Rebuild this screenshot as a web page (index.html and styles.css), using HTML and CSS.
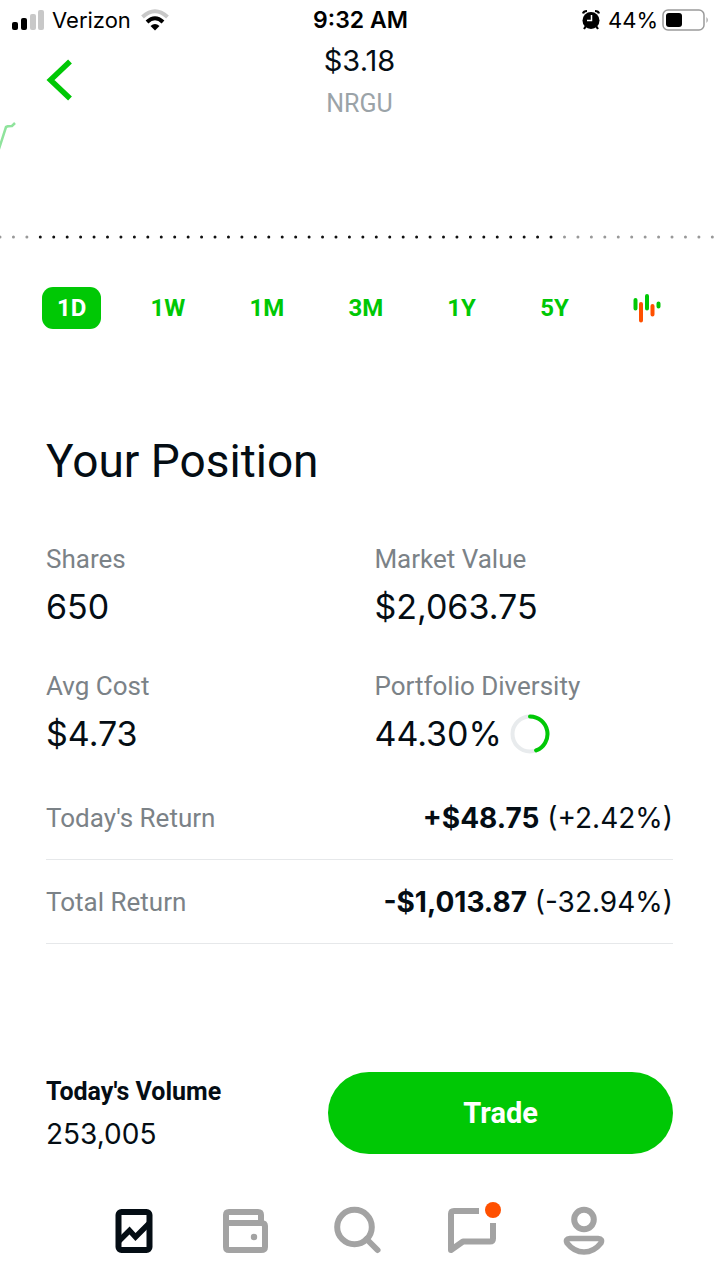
FILE: index.html
```
<!DOCTYPE html>
<html lang="en">
<head>
  <meta charset="UTF-8">
  <meta name="viewport" content="width=device-width, initial-scale=1">
  <title>NRGU</title>
  <link rel="stylesheet" href="styles.css">
</head>
<body>
  <div class="status-bar">
    <div class="status-left">
      <svg width="32" height="20" viewBox="0 0 32 20" aria-hidden="true">
        <rect x="0" y="12" width="6" height="8" rx="2"/>
        <rect x="9" y="8" width="6" height="12" rx="2"/>
        <rect x="18" y="4" width="6" height="16" rx="2" fill="#c8c8c8"/>
        <rect x="26" y="0" width="6" height="20" rx="2" fill="#c8c8c8"/>
      </svg>
      <span>Verizon</span>
      <svg width="28" height="22" viewBox="0 0 28 22" aria-hidden="true">
        <path d="M1.500 8Q14-3.500 26.500 8" fill="none" stroke="#c8c8c8" stroke-width="4"/>
        <path d="M6 13Q14 5.500 22 13" fill="none" stroke="#000" stroke-width="4"/>
        <path d="M9.500 17Q14 13 18.500 17L14 21.500Z"/>
      </svg>
    </div>
    <div class="status-time">9:32 AM</div>
    <div class="status-right">
      <svg width="18" height="22" viewBox="0 0 18 22" aria-hidden="true">
        <circle cx="9" cy="11.500" r="8.500"/>
        <path d="M1 4.500Q1.500 2 5 2M13 2Q16.500 2 17 4.500M4 17L2 20M14 17L16 20" fill="none" stroke="#000" stroke-width="2.200"/>
        <path d="M9.500 6V11.500H5" fill="none" stroke="#fff" stroke-width="1.500"/>
      </svg>
      <span>44%</span>
      <svg width="47" height="22" viewBox="0 0 47 22" aria-hidden="true">
        <rect x="1" y="1" width="41" height="20" rx="5" fill="none" stroke="#9a9a9a" stroke-width="1.500"/>
        <rect x="4" y="4" width="16" height="14" rx="3"/>
        <path d="M44.500 8Q47 11 44.500 14Z" fill="#9a9a9a"/>
      </svg>
    </div>
  </div>

  <header class="header">
    <button class="back-btn" aria-label="Back">
      <svg width="26" height="42" viewBox="0 0 26 42"><path d="M24 2.500L4.500 21L24 39.500" fill="none" stroke="#00c805" stroke-width="5.500"/></svg>
    </button>
    <div class="price">$3.18</div>
    <h1 class="ticker">NRGU</h1>
  </header>

  <!-- end of the price line, and the previous close as dots -->
  <svg class="chart" viewBox="0 0 719 120" aria-hidden="true">
    <path d="M-2 30L6 5Q7 4 12 4L15 1" fill="none" stroke="#8fe39c" stroke-width="2.500"/>
    <g fill="none" stroke-width="3" stroke-linecap="round" stroke-dasharray="0 13.440">
      <path d="M0 115H34" stroke="#999"/>
      <path d="M40.300 115H552" stroke="#111"/>
      <path d="M564.500 115H719" stroke="#999"/>
    </g>
  </svg>

  <nav class="periods" aria-label="Chart range">
    <button class="period active">1D</button>
    <button class="period">1W</button>
    <button class="period">1M</button>
    <button class="period">3M</button>
    <button class="period">1Y</button>
    <button class="period">5Y</button>
    <button class="period" aria-label="Candlestick chart">
      <svg width="28" height="30" viewBox="0 0 28 30">
        <g fill="none" stroke-width="4" stroke-linecap="round">
          <path d="M2.500 7V15.500M14 3V15.500M25.500 10.500V13.500" stroke="#00c805"/>
          <path d="M8 11V27.500M19.500 13V21.500" stroke="#ff5000"/>
        </g>
      </svg>
    </button>
  </nav>

  <main class="position">
    <h2>Your Position</h2>
    <dl class="stats">
      <div>
        <dt>Shares</dt>
        <dd>650</dd>
      </div>
      <div>
        <dt>Market Value</dt>
        <dd>$2,063.75</dd>
      </div>
      <div>
        <dt>Avg Cost</dt>
        <dd>$4.73</dd>
      </div>
      <div>
        <dt>Portfolio Diversity</dt>
        <dd>44.30%
          <svg width="40" height="40" viewBox="0 0 40 40" aria-hidden="true">
            <circle cx="20" cy="20" r="17.500" fill="none" stroke="#e8ebed" stroke-width="4"/>
            <path d="M20 2.500A17.500 17.500 0 0 1 26.100 36.400" fill="none" stroke="#00c805" stroke-width="4" stroke-linecap="round"/>
          </svg>
        </dd>
      </div>
    </dl>
    <dl class="returns">
      <div>
        <dt>Today's Return</dt>
        <dd><b>+$48.75</b> (+2.42%)</dd>
      </div>
      <div>
        <dt>Total Return</dt>
        <dd><b>-$1,013.87</b> (-32.94%)</dd>
      </div>
    </dl>
  </main>

  <footer class="footer">
    <div class="trade-bar">
      <div class="volume">
        <b>Today's Volume</b>
        <span>253,005</span>
      </div>
      <button class="trade-btn">Trade</button>
    </div>
    <nav class="tabs" aria-label="Main">
      <a href="#" aria-label="Investing" class="current">
        <svg width="50" height="48" viewBox="0 0 50 48">
          <rect x="9.500" y="5" width="31" height="38" rx="3"/>
          <path d="M10 34L20.500 23.500L26.500 30L41 15.500" stroke-width="5.500"/>
        </svg>
      </a>
      <a href="#" aria-label="Cash">
        <svg width="50" height="48" viewBox="0 0 50 48">
          <path d="M39 16V8Q39 5 36 5H7Q4 5 4 8V40Q4 43 7 43H39Q43 43 43 40V19Q43 16 39 16H4"/>
          <circle cx="32" cy="30" r="3.200" fill="currentColor" stroke="none"/>
        </svg>
      </a>
      <a href="#" aria-label="Search">
        <svg width="50" height="48" viewBox="0 0 50 48">
          <circle cx="20.500" cy="20" r="17.300"/>
          <path d="M32.500 32L43.500 43" stroke-linecap="round"/>
        </svg>
      </a>
      <a href="#" aria-label="Messages">
        <svg width="54" height="48" viewBox="0 0 54 48">
          <path d="M34 4H9Q6 4 6 7V43L18 34.500H45Q48 34.500 48 31.500V16" stroke-linejoin="round"/>
          <circle cx="48" cy="3" r="8" fill="#ff5000" stroke="none"/>
        </svg>
      </a>
      <a href="#" aria-label="Account">
        <svg width="50" height="48" viewBox="0 0 50 48">
          <circle cx="24" cy="12.500" r="9.800"/>
          <path d="M10 31.500H38Q43 32 41 36Q34 45 24 45T7 36Q5 32 10 31.500Z" stroke-width="5.500"/>
        </svg>
      </a>
    </nav>
  </footer>
</body>
</html>
```
FILE: styles.css
```
* {
  box-sizing: border-box;
}
body {
  margin: 0;
  min-height: 100vh;
  display: flex;
  flex-direction: column;
  background: #fff;
  color: #040d14;
  font-family: Inter, sans-serif;
  overflow-x: hidden;
}
button {
  padding: 0;
  border: none;
  background: none;
  font: inherit;
  cursor: pointer;
}
svg {
  display: block;
}
h1, h2, dl, dd {
  margin: 0;
  font-weight: 400;
}
b {
  font-weight: 700;
}
.status-bar {
  display: grid;
  grid-template-columns: 1fr auto 1fr;
  align-items: center;
  height: 40px;
  padding: 0 10px 0 12px;
  font-size: 22px;
  color: #000;
}
.status-left,
.status-right {
  display: flex;
  align-items: center;
  gap: 8px;
}
.status-left svg:last-child {
  margin-left: 2px;
}
.status-right {
  justify-content: flex-end;
}
.status-right svg:last-child {
  margin-left: -4px;
}
.status-time {
  font-size: 23px;
  font-weight: 600;
}
.header {
  position: relative;
  text-align: center;
}
.back-btn {
  position: absolute;
  left: 46px;
  top: 19px;
}
.price {
  font-size: 29px;
  line-height: 42px;
}
.ticker {
  font-family: Roboto, sans-serif;
  font-size: 25px;
  line-height: 44px;
  color: #9ba3a8;
}
.chart {
  width: 100%;
  margin-top: -4px;
}
.periods {
  display: flex;
  justify-content: space-between;
  margin: 45px 43px 0 42px;
}
.period {
  display: flex;
  align-items: center;
  height: 42px;
  padding: 0 15px;
  border-radius: 11px;
  font-family: Roboto, sans-serif;
  font-size: 24px;
  font-weight: 700;
  color: #00c805;
}
.period.active {
  background: #00c805;
  color: #fff;
}
.position {
  padding: 0 46px;
}
.position h2 {
  margin-top: 106px;
  font-family: Roboto, sans-serif;
  font-size: 46px;
  line-height: 52px;
}
.position dt {
  font-family: Roboto, sans-serif;
  font-size: 26px;
  line-height: 32px;
  color: #7b8287;
}
.stats {
  display: grid;
  grid-template-columns: 11fr 10fr;
  row-gap: 39px;
  margin-top: 56px;
}
.stats dd {
  display: flex;
  align-items: center;
  gap: 8px;
  margin-top: 8px;
  font-size: 34px;
  line-height: 48px;
}
.returns {
  margin-top: 18px;
}
.returns div {
  display: flex;
  justify-content: space-between;
  align-items: center;
  height: 84px;
  border-bottom: 1px solid #e6e8ea;
}
.returns dd {
  font-size: 28px;
}
.footer {
  margin-top: auto;
  padding-bottom: 24px;
}
.trade-bar {
  display: flex;
  justify-content: space-between;
  align-items: center;
  padding: 0 46px;
}
.volume {
  font-size: 28px;
  line-height: 42px;
}
.volume b {
  display: block;
  font-family: Roboto, sans-serif;
  font-size: 25px;
}
.trade-btn {
  flex: 0 0 55%;
  height: 82px;
  border-radius: 41px;
  background: #00c805;
  font-family: Roboto, sans-serif;
  font-size: 29px;
  font-weight: 700;
  color: #fff;
}
.tabs {
  display: flex;
  margin-top: 52px;
  padding: 0 78px;
}
.tabs a {
  flex: 1;
  display: flex;
  justify-content: center;
  color: #a3a3a3;
}
.tabs a.current {
  color: #040d14;
}
.tabs svg {
  overflow: visible;
  fill: none;
  stroke: currentColor;
  stroke-width: 6;
}
```
